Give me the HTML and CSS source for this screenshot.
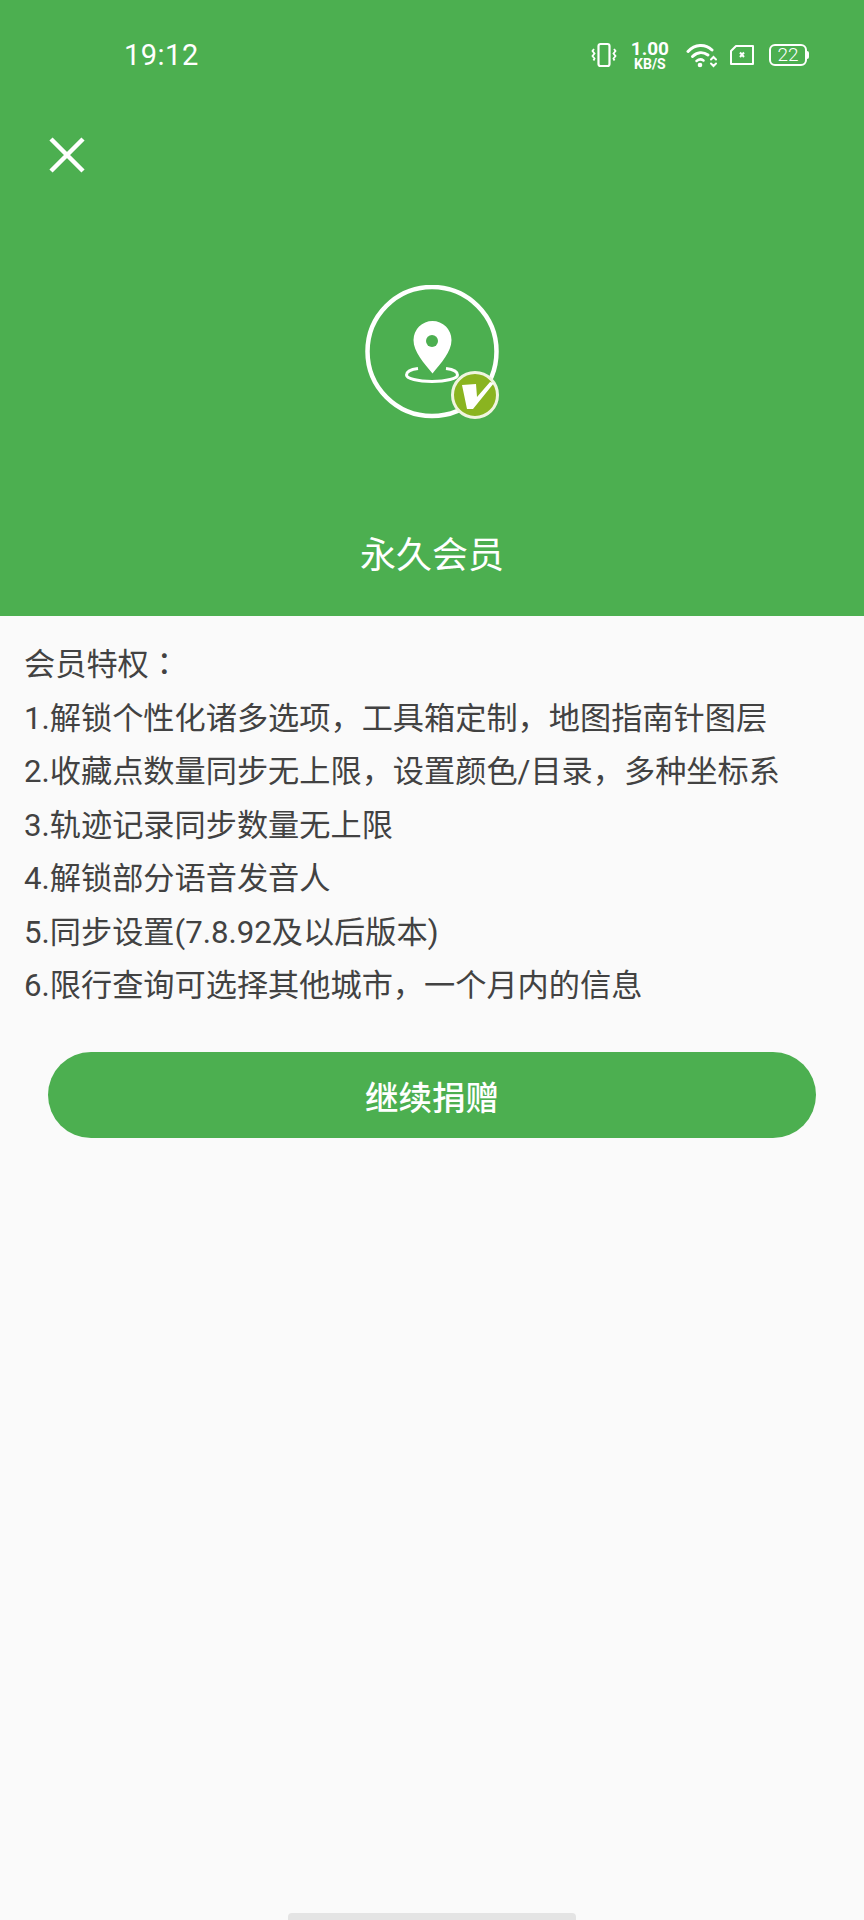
FILE: index.html
```html
<!DOCTYPE html>
<html lang="zh-CN">
<head>
    <meta charset="UTF-8">
    <meta name="viewport" content="width=device-width, initial-scale=1.0">
    <title>永久会员</title>
    <link rel="stylesheet" href="styles.css">
</head>
<body>
    <div id="page">
        <div id="header">
            <div class="status-bar">
                <span class="time">19:12</span>
                <div class="status-icons">
                    <svg class="icon-vibrate" width="26" height="26" viewBox="0 0 26 26" fill="none" stroke="#fff" stroke-width="2.200">
                        <rect x="7.500" y="2" width="11" height="22" rx="2"/>
                        <path d="M3 7l-1.500 2 2 2.500-2 2.500 2 2.500-1 2M23 7l1.500 2-2 2.500 2 2.500-2 2.500 1 2" stroke-width="1.800"/>
                    </svg>
                    <div class="speed">
                        <span class="speed-num">1.00</span>
                        <span class="speed-unit">KB/S</span>
                    </div>
                    <svg class="icon-wifi" width="32" height="26" viewBox="0 0 32 26" fill="none" stroke="#fff" stroke-linecap="round">
                        <path d="M2 9.500C9 2 19 1.500 26 8" stroke-width="3"/>
                        <path d="M6.500 14.500C11 10 17 9.500 22 13" stroke-width="3"/>
                        <path d="M10.500 19c2.500-2 5-2 7 -.5" stroke-width="2.500"/>
                        <circle cx="14" cy="23" r="2.300" fill="#fff" stroke="none"/>
                        <path d="M25 17.500l2.500-2.500 2.500 2.500M25 21.500l2.500 2.500 2.500-2.500" stroke-width="2"/>
                    </svg>
                    <svg class="icon-sim" width="26" height="22" viewBox="0 0 26 22" fill="none" stroke="#fff" stroke-width="2">
                        <path d="M7 2h17v18H2V7z" stroke-linejoin="round"/>
                        <path d="M11 8.500l4 4.500M15 8.500l-4 4.500" stroke-width="2"/>
                    </svg>
                    <div class="battery">
                        <span class="battery-body">22</span>
                        <span class="battery-tip"></span>
                    </div>
                </div>
            </div>
            <button class="close-btn" aria-label="关闭">
                <svg width="38" height="38" viewBox="0 0 38 38" stroke="#fff" stroke-width="4.500" fill="none">
                    <path d="M3 3l32 32M35 3L3 35"/>
                </svg>
            </button>
            <div class="logo">
                <svg width="136" height="136" viewBox="0 0 136 136" fill="none">
                    <circle cx="68" cy="66.500" r="64.500" stroke="#fff" stroke-width="4.500"/>
                    <path d="M68.500 88.500C60 78 49.500 67 49.500 55a19 19 0 0 1 38 0C87.500 67 77 78 68.500 88.500z" fill="#fff"/>
                    <circle cx="68" cy="56" r="6" fill="#4caf50"/>
                    <path d="M54 83.500C46 84.500 42.500 87 42.500 90c0 3.500 11 6.500 25.500 6.500S93.500 93.500 93.500 90c0-3-3.500-5.500-11.500-6.500" stroke="#fff" stroke-width="3"/>
                    <circle cx="111" cy="110" r="22.500" fill="#8ab420" stroke="#f0f5e0" stroke-width="3"/>
                    <path d="M98 100l14-1 1 13 13-15 4 1-21 26h-6z" fill="#fff"/>
                </svg>
            </div>
            <div class="title">永久会员</div>
        </div>
        <div id="content">
            <ul class="perks">
                <li>会员特权<span class="colon" lang="zh-TW">：</span></li>
                <li>1.解锁个性化诸多选项，工具箱定制，地图指南针图层</li>
                <li>2.收藏点数量同步无上限，设置颜色/目录，多种坐标系</li>
                <li>3.轨迹记录同步数量无上限</li>
                <li>4.解锁部分语音发音人</li>
                <li>5.同步设置(7.8.92及以后版本)</li>
                <li>6.限行查询可选择其他城市，一个月内的信息</li>
            </ul>
            <button class="donate-btn">继续捐赠</button>
        </div>
        <div class="home-bar"></div>
    </div>
</body>
</html>
```

FILE: styles.css
```css
body {
    font-family: 'Roboto', 'Noto Sans CJK SC', sans-serif;
    margin: 0;
    padding: 0;
    background: #fafafa;
}
#page {
    width: 864px;
    height: 1920px;
    display: flex;
    flex-direction: column;
    overflow: hidden;
}
#header {
    height: 616px;
    background: #4caf50;
    color: white;
    display: flex;
    flex-direction: column;
    flex-shrink: 0;
}
.status-bar {
    height: 110px;
    padding: 0 55px 0 124px;
    display: flex;
    justify-content: space-between;
    align-items: center;
    box-sizing: border-box;
}
.time {
    font-size: 29px;
    letter-spacing: 0.5px;
}
.status-icons {
    display: flex;
    align-items: center;
}
.icon-vibrate { margin-right: 14px; }
.speed {
    display: flex;
    flex-direction: column;
    align-items: center;
    font-weight: 700;
    margin-right: 17px;
}
.speed-num { font-size: 19px; line-height: 18px; }
.speed-unit { font-size: 14px; line-height: 13px; }
.icon-wifi { margin-right: 11px; }
.icon-sim { margin-right: 14px; }
.battery {
    display: flex;
    align-items: center;
}
.battery-body {
    width: 34px;
    height: 18px;
    border: 2px solid white;
    border-radius: 6px;
    font-size: 19px;
    font-weight: 300;
    line-height: 18px;
    text-align: center;
}
.battery-tip {
    width: 2px;
    height: 8px;
    background: white;
    border-radius: 0 2px 2px 0;
}
.close-btn {
    background: none;
    border: none;
    padding: 0;
    margin: 26px 0 0 48px;
    width: 38px;
    height: 38px;
}
.logo {
    display: flex;
    justify-content: center;
    margin-top: 111px;
}
.title {
    margin-top: 110px;
    text-align: center;
    font-size: 36px;
    line-height: 50px;
}
#content {
    flex: 1;
    padding: 19px 24px 0;
    color: #424242;
}
.perks {
    list-style: none;
    margin: 0;
    padding: 0;
    font-size: 31.2px;
    line-height: 53.5px;
}
.colon { font-family: 'Noto Sans CJK TC', sans-serif; }
.donate-btn {
    display: block;
    width: 768px;
    height: 86px;
    margin: 39.5px auto 0;
    border: none;
    border-radius: 43px;
    background: #4caf50;
    color: white;
    font-family: inherit;
    font-size: 33.5px;
    font-weight: 500;
}
.home-bar {
    position: absolute;
    left: 288px;
    top: 1913px;
    width: 288px;
    height: 7px;
    border-radius: 4px 4px 0 0;
    background: #e4e4e4;
}
```
